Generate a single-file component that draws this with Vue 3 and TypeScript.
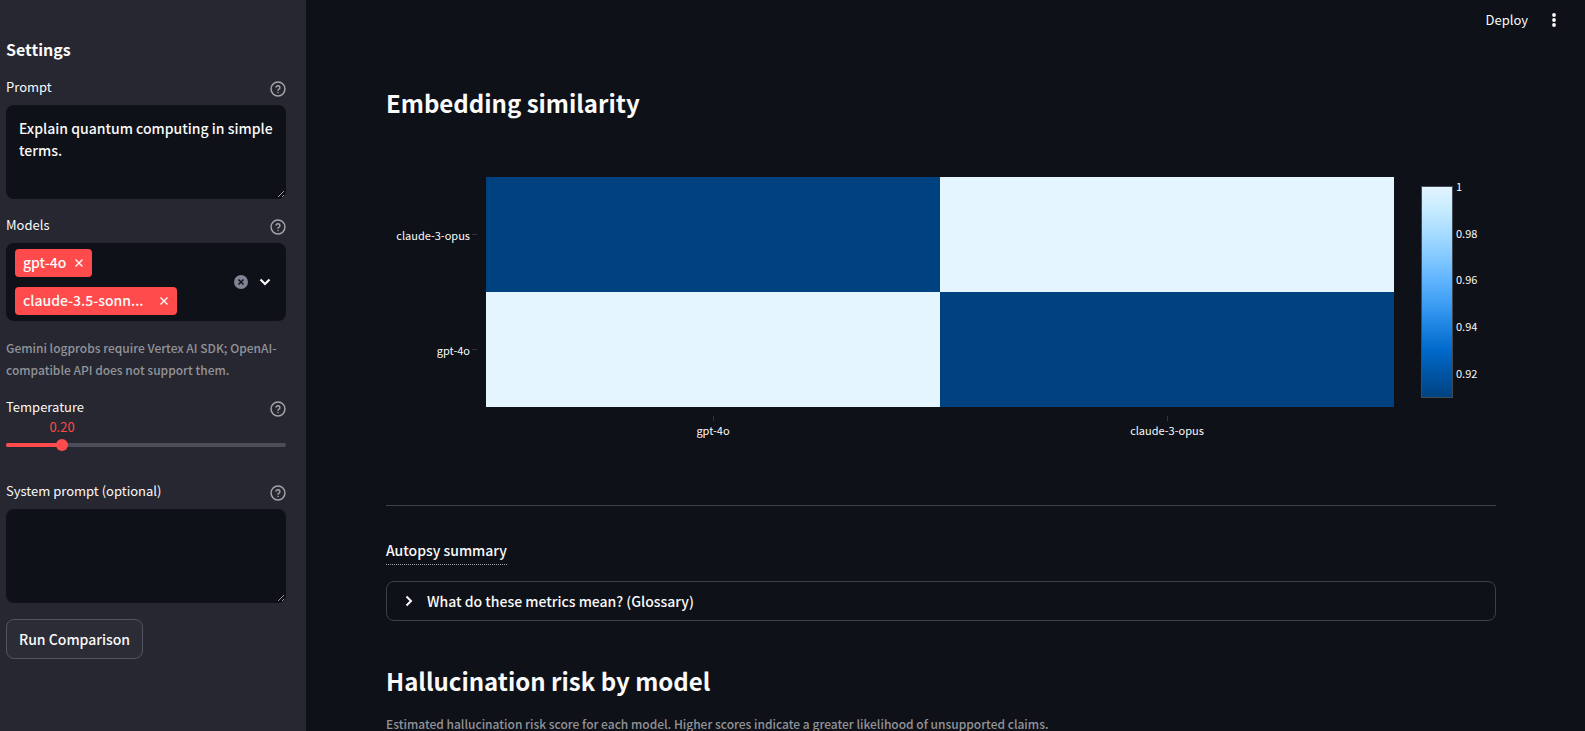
<script setup lang="ts">
import { computed, ref } from 'vue'

const prompt = ref('Explain quantum computing in simple terms.')
const systemPrompt = ref('')
const temperature = ref(0.2)
const models = ref<string[]>(['gpt-4o', 'claude-3.5-sonnet'])

const temperatureLabel = computed(() => Number(temperature.value).toFixed(2))
const temperaturePercent = computed(() => `${temperature.value * 100}%`)

const rows = ['claude-3-opus', 'gpt-4o']
const columns = ['gpt-4o', 'claude-3-opus']
const cells = [
  { id: 'opus-gpt', level: 'low' },
  { id: 'opus-opus', level: 'high' },
  { id: 'gpt-gpt', level: 'high' },
  { id: 'gpt-opus', level: 'low' },
]

const scaleMin = 0.91
const scaleMax = 1
const scaleTicks = [1, 0.98, 0.96, 0.94, 0.92].map((value) => ({
  value,
  top: `${((scaleMax - value) / (scaleMax - scaleMin)) * 100}%`,
}))

const maxChipLength = 15

function shorten(name: string): string {
  return name.length > maxChipLength ? `${name.slice(0, maxChipLength)}...` : name
}

function removeModel(name: string): void {
  models.value = models.value.filter((m) => m !== name)
}
</script>

<template>
  <div class="app">
    <svg class="defs" aria-hidden="true">
      <symbol id="help" viewBox="0 0 24 24">
        <g fill="none" stroke="currentColor" stroke-width="2.2" stroke-linecap="round" stroke-linejoin="round">
          <circle cx="12" cy="12" r="10.4" />
          <path d="M9.1 9a3 3 0 0 1 5.8 1c0 2-2.9 2.6-2.9 4" />
          <path d="M12 17.4h.01" />
        </g>
      </symbol>
      <symbol id="cross" viewBox="0 0 10 10">
        <path d="M1.5 1.5l7 7M8.5 1.5l-7 7" fill="none" stroke="currentColor" stroke-width="1.4" />
      </symbol>
    </svg>

    <aside class="sidebar">
      <h2 class="settings">Settings</h2>

      <div class="field">
        <div class="label-row">
          <label for="prompt">Prompt</label>
          <button class="help" type="button" aria-label="Help for Prompt"><svg><use href="#help" /></svg></button>
        </div>
        <textarea id="prompt" v-model="prompt" spellcheck="false"></textarea>
      </div>

      <div class="field">
        <div class="label-row">
          <label for="models">Models</label>
          <button class="help" type="button" aria-label="Help for Models"><svg><use href="#help" /></svg></button>
        </div>
        <div class="multiselect">
          <div class="chips">
            <span v-for="model in models" :key="model" class="chip">
              <span class="chip-text" :class="{ shortened: model.length > maxChipLength }">{{ shorten(model) }}</span>
              <button type="button" :aria-label="`Remove ${model}`" @click="removeModel(model)">
                <svg><use href="#cross" /></svg>
              </button>
            </span>
            <input id="models" class="search" type="text" role="combobox" aria-expanded="false" autocomplete="off" />
          </div>
          <button class="clear" type="button" aria-label="Clear all" @click="models = []">
            <svg viewBox="0 0 14 14">
              <circle cx="7" cy="7" r="7" fill="#808495" />
              <path d="M4.5 4.5l5 5M9.5 4.5l-5 5" stroke="#0e1117" stroke-width="1.5" />
            </svg>
          </button>
          <button class="open" type="button" aria-label="Open">
            <svg viewBox="0 0 12 8"><path d="M1.5 1.5L6 6l4.5-4.5" fill="none" stroke="currentColor" stroke-width="2.2" /></svg>
          </button>
        </div>
      </div>

      <p class="caption">Gemini logprobs require Vertex AI SDK; OpenAI-compatible API does not support them.</p>

      <div class="field slider-field">
        <div class="label-row">
          <label for="temperature">Temperature</label>
          <button class="help" type="button" aria-label="Help for Temperature"><svg><use href="#help" /></svg></button>
        </div>
        <div class="slider">
          <output class="slider-value" for="temperature" :style="{ marginLeft: temperaturePercent }">{{ temperatureLabel }}</output>
          <div class="rail">
            <div class="rail-fill" :style="{ width: temperaturePercent }"></div>
            <input id="temperature" v-model.number="temperature" type="range" min="0" max="1" step="0.05" />
          </div>
        </div>
      </div>

      <div class="field">
        <div class="label-row">
          <label for="system">System prompt (optional)</label>
          <button class="help" type="button" aria-label="Help for System prompt"><svg><use href="#help" /></svg></button>
        </div>
        <textarea id="system" v-model="systemPrompt"></textarea>
      </div>

      <button class="run" type="button">Run Comparison</button>
    </aside>

    <div class="page">
      <header class="toolbar">
        <button class="deploy" type="button">Deploy</button>
        <button class="menu" type="button" aria-label="Main menu">
          <svg viewBox="0 0 4 14" fill="currentColor">
            <circle cx="2" cy="2" r="1.9" /><circle cx="2" cy="7" r="1.9" /><circle cx="2" cy="12" r="1.9" />
          </svg>
        </button>
      </header>

      <main class="content">
        <h2 class="title">Embedding similarity</h2>

        <figure class="chart" aria-label="Embedding similarity heatmap">
          <div class="y-axis">
            <span v-for="name in rows" :key="name" class="y-label">{{ name }}</span>
          </div>
          <div class="heatmap">
            <div v-for="cell in cells" :key="cell.id" class="cell" :class="cell.level"></div>
          </div>
          <div class="scale">
            <div class="scale-bar"></div>
            <div class="scale-ticks">
              <span v-for="tick in scaleTicks" :key="tick.value" :style="{ top: tick.top }">{{ tick.value }}</span>
            </div>
          </div>
          <div class="x-axis">
            <span v-for="name in columns" :key="name" class="x-label">{{ name }}</span>
          </div>
        </figure>

        <hr />

        <p class="summary-title"><span>Autopsy summary</span></p>

        <details class="glossary">
          <summary>
            <svg viewBox="0 0 8 12"><path d="M1.5 1.5L6 6l-4.5 4.5" fill="none" stroke="currentColor" stroke-width="2" /></svg>
            What do these metrics mean? (Glossary)
          </summary>
        </details>

        <h2 class="title risk">Hallucination risk by model</h2>
        <p class="caption">Estimated hallucination risk score for each model. Higher scores indicate a greater likelihood of unsupported claims.</p>
      </main>
    </div>
  </div>
</template>

<style>
body {
  background: #0e1117;
  overflow: hidden;
}
</style>

<style scoped>
.app {
  display: flex;
  height: 100vh;
  overflow: hidden;
  background: #0e1117;
  color: #fafafa;
  color-scheme: dark;
  font-family: 'Noto Sans CJK SC', 'Noto Sans', sans-serif;
  font-size: 14px;
  font-weight: 500;
  line-height: 22px;
}
.app * {
  box-sizing: border-box;
}
.defs {
  position: absolute;
  width: 0;
  height: 0;
}
button,
input,
textarea {
  font: inherit;
  color: inherit;
}
button {
  padding: 0;
  border: 0;
  background: none;
  cursor: pointer;
}
h2,
p,
figure {
  margin: 0;
}
svg {
  display: block;
}

.sidebar {
  display: flex;
  flex: 0 0 306px;
  flex-direction: column;
  align-items: stretch;
  gap: 16px;
  padding: 37px 20px 16px 6px;
  background: #262730;
}
.settings {
  font-size: 16px;
  font-weight: 600;
  line-height: 24px;
}
.label-row {
  display: flex;
  justify-content: space-between;
  height: 24px;
  margin-bottom: 4px;
}
.label-row label {
  font-size: 13px;
  font-weight: 400;
  line-height: 20px;
}
.help {
  display: flex;
  align-items: center;
  color: #a3a4a9;
}
.help svg {
  width: 16px;
  height: 16px;
}
textarea {
  display: block;
  width: 100%;
  height: 94px;
  padding: 11px 12px;
  border: 1px solid transparent;
  border-radius: 8px;
  outline: 0;
  background: #0e1117;
  resize: vertical;
}
.multiselect {
  display: flex;
  align-items: center;
  min-height: 78px;
  padding: 6px 15px 6px 9px;
  border-radius: 8px;
  background: #0e1117;
}
.chips {
  display: flex;
  flex: 1;
  flex-wrap: wrap;
  gap: 10px 0;
  min-width: 0;
}
.chip {
  display: flex;
  align-items: center;
  height: 28px;
  padding: 0 8px;
  border-radius: 4px;
  background: #ff4b4b;
  line-height: 20px;
}
.chip:first-child {
  margin-right: 60px;
}
.chip-text {
  margin-right: 8px;
  padding-bottom: 2px;
  white-space: nowrap;
}
.chip-text.shortened {
  min-width: 128px;
}
.chip svg {
  width: 10px;
  height: 10px;
}
.search {
  width: 4px;
  height: 28px;
  padding: 0;
  border: 0;
  outline: 0;
  background: transparent;
}
.clear svg {
  width: 14px;
  height: 14px;
}
.open {
  margin-left: 11px;
}
.open svg {
  width: 12px;
  height: 8px;
}
.caption {
  color: #929399;
  font-size: 12px;
}
.slider-field .label-row {
  margin-bottom: 0;
}
.slider {
  height: 44px;
}
.slider-value {
  display: flex;
  justify-content: center;
  width: 0;
  margin-bottom: 10px;
  color: #ff4b4b;
  font-size: 13px;
  font-weight: 400;
  line-height: 12px;
}
.rail {
  position: relative;
  height: 4px;
  border-radius: 4px;
  background: #4c4d58;
}
.rail-fill {
  height: 4px;
  border-radius: 4px;
  background: #ff4b4b;
}
.rail input {
  position: absolute;
  top: -4px;
  left: -6px;
  width: calc(100% + 12px);
  height: 12px;
  margin: 0;
  background: transparent;
  appearance: none;
}
.rail input::-webkit-slider-thumb {
  width: 12px;
  height: 12px;
  border-radius: 50%;
  background: #ff4b4b;
  appearance: none;
}
.run {
  align-self: flex-start;
  height: 40px;
  padding: 0 12px;
  border: 1px solid #53545c;
  border-radius: 8px;
  background: #2b2c36;
}

.page {
  display: flex;
  flex: 1;
  flex-direction: column;
  min-width: 0;
}
.toolbar {
  display: flex;
  flex: none;
  align-items: center;
  justify-content: flex-end;
  gap: 24px;
  height: 40px;
  padding-right: 29px;
}
.deploy {
  font-size: 13px;
  font-weight: 400;
  line-height: 20px;
}
.menu svg {
  width: 4px;
  height: 14px;
}
.content {
  flex: 1;
  min-height: 0;
  padding: 46px 89px 0 80px;
  overflow: hidden;
}
.title {
  font-size: 24px;
  font-weight: 600;
  line-height: 34px;
}
.chart {
  display: grid;
  grid-template-columns: 100px 1fr 102px;
  grid-template-rows: 230px auto;
  padding: 57px 0 67px;
  font-size: 11px;
  font-weight: 400;
  line-height: 16px;
}
.y-axis {
  display: grid;
  grid-template-rows: 1fr 1fr;
  padding-right: 9px;
}
.y-label {
  display: flex;
  align-items: center;
  justify-content: flex-end;
  gap: 2px;
}
.y-label::after {
  width: 5px;
  height: 1px;
  background: #31333f;
  content: '';
}
.heatmap {
  display: grid;
  grid-template-rows: 1fr 1fr;
  grid-template-columns: 1fr 1fr;
}
.low {
  background: #004280;
}
.high {
  background: #e4f5ff;
}
.scale {
  display: flex;
  gap: 3px;
  padding: 9px 0 9px 27px;
}
.scale-bar {
  width: 32px;
  border: 1px solid #444b55;
  background: linear-gradient(#e4f5ff, #c7ebff, #a6dcff, #83c9ff, #60b4ff, #3d9df3, #1c83e1, #0068c9, #0054a3, #004280) border-box;
}
.scale-ticks {
  position: relative;
  flex: 1;
  margin-bottom: 2px;
}
.scale-ticks span {
  position: absolute;
  transform: translateY(-50%);
}
.x-axis {
  display: grid;
  grid-column: 2;
  grid-template-columns: 1fr 1fr;
  padding-top: 9px;
}
.x-label {
  display: flex;
  flex-direction: column;
  align-items: center;
  gap: 1px;
}
.x-label::before {
  width: 1px;
  height: 5px;
  background: #31333f;
  content: '';
}
hr {
  height: 1px;
  margin: 0 0 33px;
  border: 0;
  background: #3e4046;
}
.summary-title {
  display: flex;
  margin-bottom: 16px;
}
.summary-title span {
  padding-bottom: 3px;
  border-bottom: 1px dotted #a3a4a9;
}
.glossary {
  border: 1px solid #3e4046;
  border-radius: 8px;
}
.glossary summary {
  display: flex;
  align-items: center;
  gap: 14px;
  height: 38px;
  padding: 0 18px;
  cursor: pointer;
  list-style: none;
}
.glossary svg {
  width: 8px;
  height: 12px;
}
.risk {
  margin: 43px 0 15px;
}
</style>
